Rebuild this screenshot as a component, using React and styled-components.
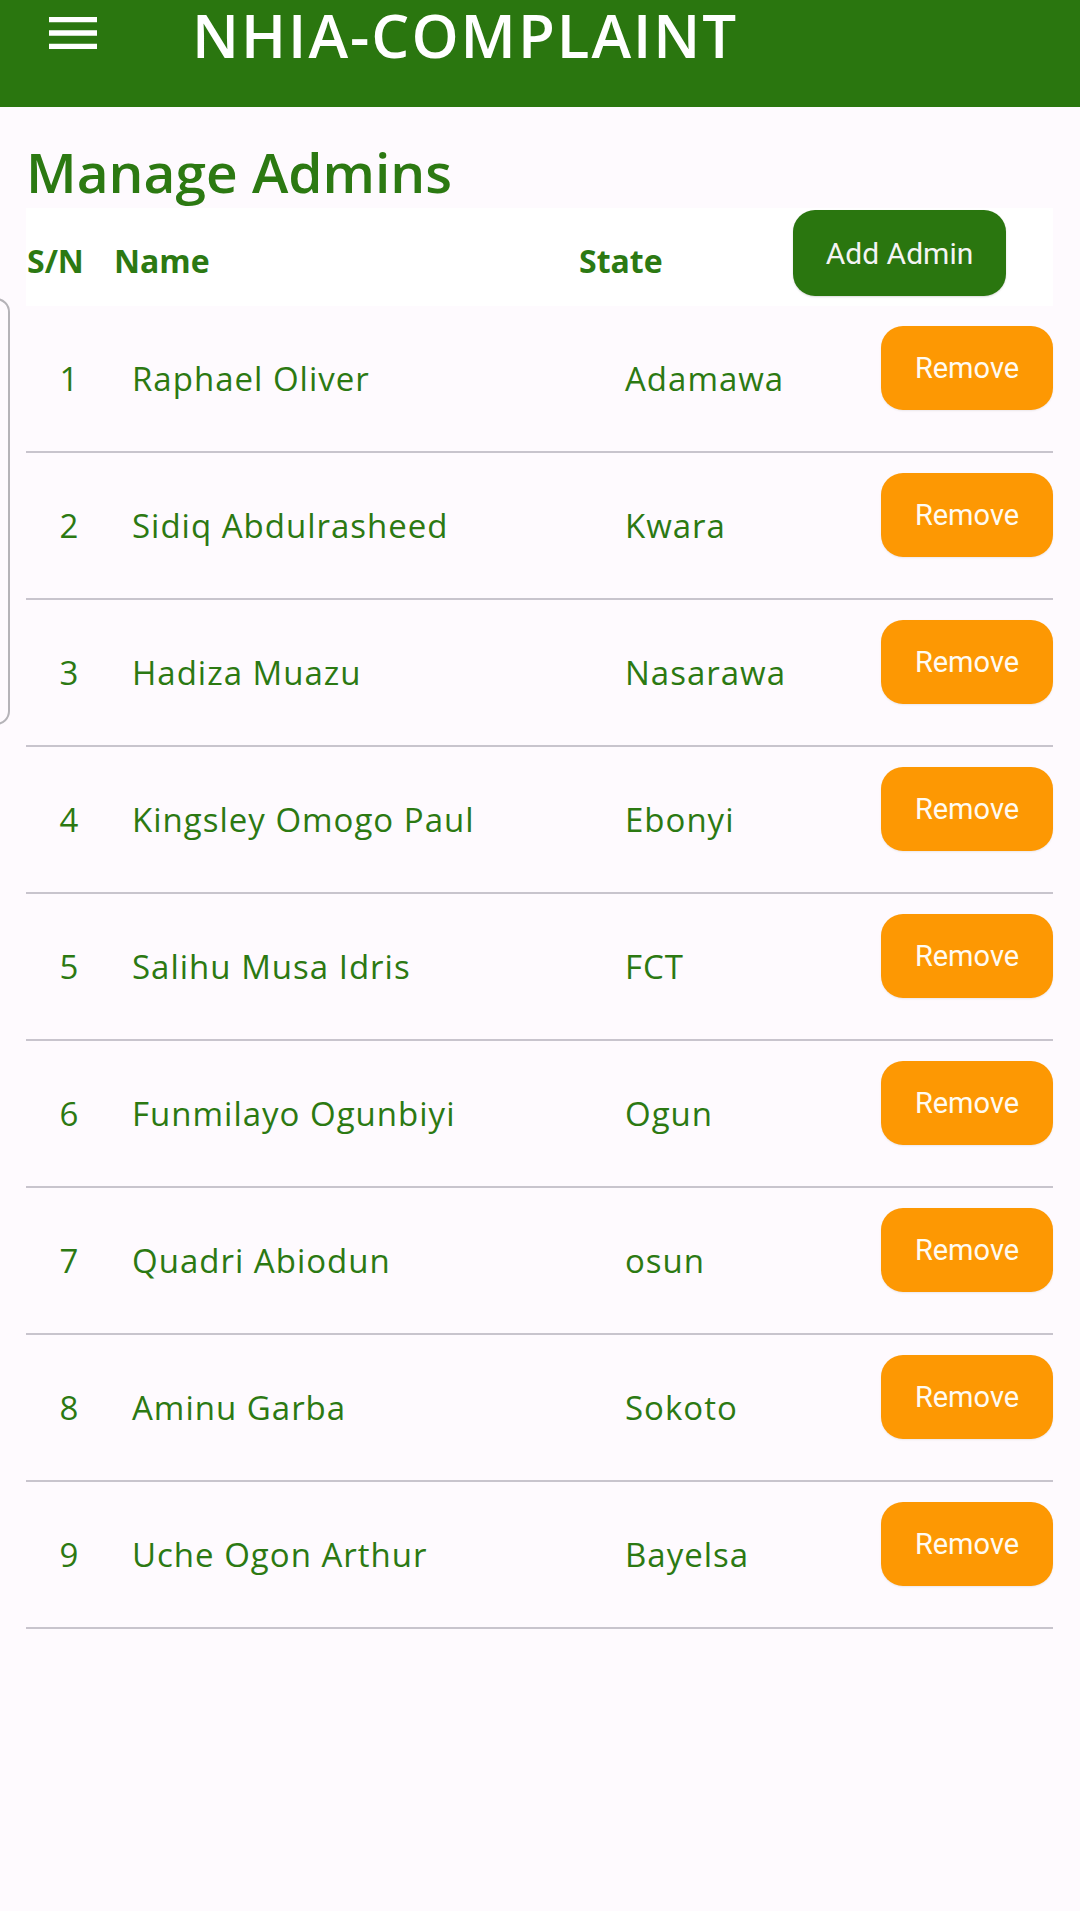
import React from "react";
import styled, { createGlobalStyle } from "styled-components";

const GREEN = "#2a760f";
const TEXT_GREEN = "#2c7912";
const ORANGE = "#fd9803";
const DISPLAY_FONT = '"Open Sans", "Noto Sans", sans-serif';
const BUTTON_FONT = 'Roboto, "Noto Sans", sans-serif';

const GlobalStyle = createGlobalStyle`
  html, body {
    margin: 0;
    padding: 0;
    background: #fefafe;
  }
  body {
    font-family: ${DISPLAY_FONT};
    min-height: 1911px;
  }
  * { box-sizing: border-box; }
`;

const Page = styled.div`
  position: relative;
  min-height: 1911px;
  background: #fefafe;
`;

const AppBar = styled.header`
  height: 107px;
  background: ${GREEN};
  display: flex;
  align-items: flex-start;
  padding: 1px 0 0 41px;
`;

const MenuButton = styled.button`
  width: 64px;
  height: 64px;
  padding: 0;
  border: 0;
  background: transparent;
  color: #ffffff;
  display: flex;
  cursor: pointer;
`;

const Title = styled.h1`
  margin: 4px 0 0 87px;
  font-family: ${DISPLAY_FONT};
  font-weight: 600;
  font-size: 60px;
  line-height: 60px;
  letter-spacing: 2px;
  color: #ffffff;
`;

const Main = styled.main`
  padding: 0 27px 0 26px;
`;

const Heading = styled.h2`
  margin: 37px 0 8px 0;
  font-family: ${DISPLAY_FONT};
  font-weight: 600;
  font-size: 55px;
  line-height: 56px;
  color: ${TEXT_GREEN};
`;

const HeaderBand = styled.div`
  height: 98px;
  background: #ffffff;
  display: grid;
  grid-template-columns: 88px 465px 214px 213px;
  align-items: start;
`;

const HeadLabel = styled.div`
  font-family: ${DISPLAY_FONT};
  font-weight: 700;
  font-size: 32px;
  line-height: 40px;
  color: ${TEXT_GREEN};
  padding-top: 33px;
  padding-left: ${(p) => p.$indent || 0}px;
`;

const PillButton = styled.button`
  border: 0;
  border-radius: 22px;
  font-family: ${BUTTON_FONT};
  font-weight: 400;
  cursor: pointer;
  display: flex;
  align-items: center;
  justify-content: center;
  padding: 0;
`;

const AddButton = styled(PillButton)`
  width: 213px;
  height: 86px;
  margin-top: 2px;
  background: ${GREEN};
  color: #f4f4f4;
  font-size: 30px;
  box-shadow: 0 1px 2px rgba(0, 0, 0, 0.15);
`;

const RemoveButton = styled(PillButton)`
  width: 172px;
  height: 84px;
  margin-top: 20px;
  background: ${ORANGE};
  color: #fffbf2;
  font-size: 29px;
  box-shadow: 0 1px 2px rgba(0, 0, 0, 0.08);
`;

const List = styled.div`
  display: flex;
  flex-direction: column;
`;

const Row = styled.div`
  height: 147px;
  border-bottom: 2px solid #c8c4cd;
  display: grid;
  grid-template-columns: 86px 20px 493px 256px 172px;
  align-items: start;
`;

const Cell = styled.div`
  font-family: ${DISPLAY_FONT};
  font-weight: 400;
  font-size: 33px;
  line-height: 44px;
  letter-spacing: ${(p) => (p.$center ? 0 : 1)}px;
  color: ${TEXT_GREEN};
  padding-top: 51px;
  white-space: nowrap;
  text-align: ${(p) => (p.$center ? "center" : "left")};
  grid-column: ${(p) => p.$col};
`;

const DrawerEdge = styled.div`
  position: absolute;
  left: -30px;
  top: 298px;
  width: 40px;
  height: 427px;
  border: 2px solid #b5b3b8;
  border-radius: 14px;
  background: transparent;
  pointer-events: none;
`;

const admins = [
  ["Raphael Oliver", "Adamawa"],
  ["Sidiq Abdulrasheed", "Kwara"],
  ["Hadiza Muazu", "Nasarawa"],
  ["Kingsley Omogo Paul", "Ebonyi"],
  ["Salihu Musa Idris", "FCT"],
  ["Funmilayo Ogunbiyi", "Ogun"],
  ["Quadri Abiodun", "osun"],
  ["Aminu Garba", "Sokoto"],
  ["Uche Ogon Arthur", "Bayelsa"],
];

function MenuIcon() {
  return (
    <svg width="64" height="64" viewBox="0 0 24 24" fill="currentColor">
      <path d="M3 18h18v-2H3v2zm0-5h18v-2H3v2zm0-7v2h18V6H3z" />
    </svg>
  );
}

export default function App() {
  return (
    <Page>
      <GlobalStyle />
      <AppBar>
        <MenuButton aria-label="menu">
          <MenuIcon />
        </MenuButton>
        <Title>NHIA-COMPLAINT</Title>
      </AppBar>
      <Main>
        <Heading>Manage Admins</Heading>
        <HeaderBand>
          <HeadLabel $indent={1}>S/N</HeadLabel>
          <HeadLabel>Name</HeadLabel>
          <HeadLabel>State</HeadLabel>
          <AddButton>Add Admin</AddButton>
        </HeaderBand>
        <List>
          {admins.map(([name, state], i) => (
            <Row key={name}>
              <Cell $center $col={1}>{i + 1}</Cell>
              <Cell $col={3}>{name}</Cell>
              <Cell $col={4}>{state}</Cell>
              <RemoveButton style={{ gridColumn: 5 }}>Remove</RemoveButton>
            </Row>
          ))}
        </List>
      </Main>
      <DrawerEdge />
    </Page>
  );
}
